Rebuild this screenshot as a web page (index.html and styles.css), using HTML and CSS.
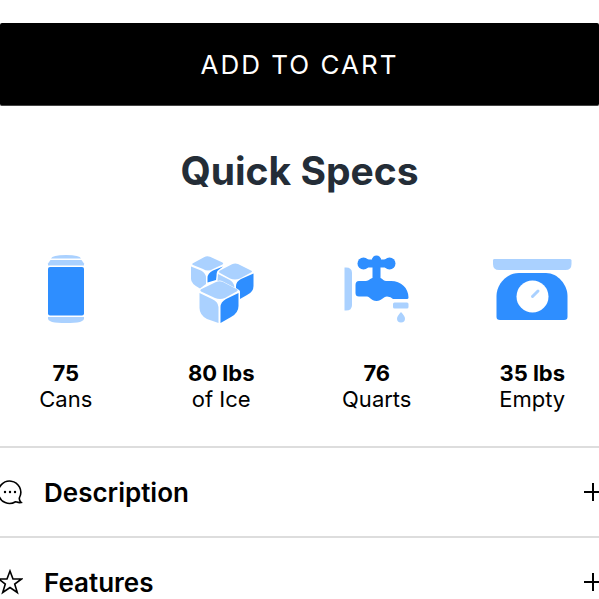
FILE: index.html
```
<!DOCTYPE html>
<html lang="en">
<head>
    <title>Quick Specs</title>
    <meta charset="utf-8">
    <meta name="viewport" content="width=device-width, initial-scale=1">
    <link rel="stylesheet" href="styles.css">
</head>
<body>
<main class="product">
    <button class="add-to-cart" type="button">ADD TO CART</button>

    <section class="specs">
        <h2 class="specs-title">Quick Specs</h2>
        <ul class="specs-list">
            <li class="spec">
                <svg class="spec-icon" viewBox="0 0 80 80" aria-hidden="true">
                    <g class="light">
                        <path d="M25 10.500Q26 7 40 7Q54 7 55 10.500Z"/>
                        <path d="M24.500 12H55.500L58 15.500V17.500H22V15.500Z"/>
                        <path d="M22 69H58V70.500Q58 72 56 73L54 74Q49 75 40 75Q31 75 26 74L24 73Q22 72 22 70.500Z"/>
                    </g>
                    <rect class="strong" x="22" y="19" width="36" height="48.500" rx="2"/>
                </svg>
                <strong>75</strong>
                <span>Cans</span>
            </li>
            <li class="spec">
                <svg class="spec-icon" viewBox="0 0 80 80" aria-hidden="true">
                    <g class="light">
                        <path d="M11.500 15.500L23 9.200Q26 7.600 29 8.800L41.500 14.500Q43 15.500 41.500 16.500L32 21Q27 24 22 21L12 17Q10.500 16.300 11.500 15.500Z"/>
                        <path d="M10 18.500L20 22.500Q25 25 25 30V36L19 40.500Q10 36 10 31Z"/>
                        <path d="M39 22.500L51 16.300Q54 14.700 57 16L70 22.500Q72 23.500 70 24.500L59 30.500Q54 32.500 49 30.500L39 25Q37 24 39 22.500Z"/>
                        <path d="M37 26L48 31.500Q53 34 53.500 39.500L42 33.500Q39 32 36.500 33Z"/>
                        <path d="M20 41.200L35 34Q38.500 32.700 42 34L56 41.200Q57.500 42.200 56 43.200L44 50Q39 52 34 50L20 43.500Q18.500 42.300 20 41.200Z"/>
                        <path d="M18.500 45L31 51Q37 53.500 37.500 59V75L26 71Q18.500 67 18.500 60Z"/>
                    </g>
                    <g class="strong">
                        <path d="M26.500 34.500V30Q26.500 25 32 22.500L42 18.500L37.500 22Q35.500 23 35.500 28L35 32Z"/>
                        <path d="M55 40V38Q55 33.500 60 31L72.500 25.500V38Q72.500 44 66 47L59 51V43.500Q59 42.500 58 42Z"/>
                        <path d="M39.500 75V59Q39.500 54 45 51L57.500 45V58Q57.500 65 50 69Z"/>
                    </g>
                </svg>
                <strong>80 lbs</strong>
                <span>of Ice</span>
            </li>
            <li class="spec">
                <svg class="spec-icon" viewBox="0 0 80 80" aria-hidden="true">
                    <g class="strong">
                        <circle cx="26.500" cy="15.500" r="6"/>
                        <circle cx="52.500" cy="15.500" r="6"/>
                        <circle cx="39.500" cy="12" r="4.500"/>
                        <rect x="25" y="11.500" width="28" height="8" rx="2"/>
                        <rect x="35.500" y="10" width="8" height="27"/>
                        <path d="M22 33H29C32 33 33 29.500 39.500 29.500S46 33 49 33H54C64 33 71.500 40 71.500 49.500Q71.500 51 70 51H56Q54 48.500 50 48.500C46 48.500 45 53 39.500 53S33 48.500 30 48.500H22Q18.500 48.500 18.500 45V37Q18.500 33 22 33Z"/>
                    </g>
                    <g class="light">
                        <path d="M7.500 19.500H9Q15 19.500 15 25V57Q15 62.500 9 62.500H7.500Z"/>
                        <rect x="56" y="54.500" width="15.500" height="6" rx="1.500"/>
                        <path d="M64 64Q60 68 60 70.500A4 4 0 0 0 68 70.500Q68 68 64 64Z"/>
                    </g>
                </svg>
                <strong>76</strong>
                <span>Quarts</span>
            </li>
            <li class="spec">
                <svg class="spec-icon" viewBox="0 0 80 80" aria-hidden="true">
                    <path class="light" d="M2 11H78Q79.500 11 79.500 12.500V16Q79.500 22 73.500 22H7Q1 22 1 16V12.500Q1 11 2 11Z"/>
                    <path class="strong" d="M27 25H54C66 25 75.500 37 75.500 48V69Q75.500 72 72 72H8Q4.500 72 4.500 69V48C4.500 37 14 25 27 25Z"/>
                    <circle cx="40.500" cy="48.500" r="16" fill="#fff"/>
                    <path class="needle" d="M40.500 48.500L46 43"/>
                </svg>
                <strong>35 lbs</strong>
                <span>Empty</span>
            </li>
        </ul>
    </section>

    <section class="accordion">
        <h3 class="accordion-item">
            <button class="accordion-button" type="button" aria-expanded="false">
                <svg class="line-icon" viewBox="0 0 26 26" aria-hidden="true">
                    <path d="M24.200 23.500C20.500 24 19.800 22.800 18.500 22.800A11.200 11.200 0 1 1 22.500 18.500C22 20 22.500 21.800 24.200 23.500Z"/>
                    <path class="dots" d="M8 13H8.010M13 13H13.010M18 13H18.010"/>
                </svg>
                <span class="accordion-label">Description</span>
                <svg class="plus" viewBox="0 0 18 18" aria-hidden="true">
                    <path d="M9 0V18M0 9H18"/>
                </svg>
            </button>
        </h3>
        <h3 class="accordion-item">
            <button class="accordion-button" type="button" aria-expanded="false">
                <svg class="line-icon" viewBox="0 0 26 26" aria-hidden="true">
                    <path d="M13 2L16 10H24.500L17.700 15L20.300 23.500L13 18.500L5.700 23.500L8.300 15L1.500 10H10Z"/>
                </svg>
                <span class="accordion-label">Features</span>
                <svg class="plus" viewBox="0 0 18 18" aria-hidden="true">
                    <path d="M9 0V18M0 9H18"/>
                </svg>
            </button>
        </h3>
    </section>
</main>
</body>
</html>
```

FILE: styles.css
```
* {
    box-sizing: border-box;
}

body {
    margin: 0;
    font-family: Inter, "Liberation Sans", sans-serif;
    color: #000;
    background-color: #fff;
    overflow-x: hidden;
}

/* no visible scrollbar beside the full-width button */
html {
    scrollbar-width: none;
}

.product {
    padding-top: 23px;
}

button {
    border: none;
    font-family: inherit;
    color: inherit;
    cursor: pointer;
}

/* Add to cart button */
.add-to-cart {
    display: block;
    width: 100%;
    padding: 25px 24px 23px;
    border-radius: 2px;
    border-bottom: 1px solid #444;
    background-color: #000;
    color: #fff;
    font-size: 26px;
    font-weight: 400;
    line-height: 34px;
    letter-spacing: 2px;
}

/* Quick specs */
.specs-title {
    margin: 40px 0 52px;
    font-size: 39px;
    font-weight: 700;
    line-height: 50px;
    text-align: center;
    color: #242d37;
}

.specs-list {
    display: grid;
    grid-template-columns: repeat(4, 1fr);
    margin: 0 -11px 0 -12px;
    padding: 0;
    list-style: none;
}

.spec {
    display: flex;
    flex-direction: column;
    align-items: center;
    font-size: 22px;
    line-height: 26px;
}

.spec-icon {
    width: 80px;
    height: 80px;
    margin-bottom: 32px;
}

.light {
    fill: #aad1ff;
}

.strong {
    fill: #2e8eff;
}

.needle {
    fill: none;
    stroke: #aad1ff;
    stroke-width: 3;
    stroke-linecap: round;
}

/* Accordion */
.accordion {
    margin: 34px -3px 0;
}

.accordion-item {
    margin: 0;
    border-top: 2px solid #ddd;
}

.accordion-button {
    display: flex;
    align-items: center;
    width: 100%;
    height: 88px;
    padding: 0;
    background: none;
    font-size: 26px;
    font-weight: 600;
    text-align: left;
}

.line-icon {
    width: 26px;
    height: 26px;
    margin-right: 21px;
    fill: none;
    stroke: #000;
    stroke-width: 1.6;
}

.line-icon .dots {
    stroke-width: 2.4;
    stroke-linecap: round;
}

.accordion-label {
    flex: 1;
}

.plus {
    width: 18px;
    height: 18px;
    fill: none;
    stroke: #000;
    stroke-width: 2;
}
```
